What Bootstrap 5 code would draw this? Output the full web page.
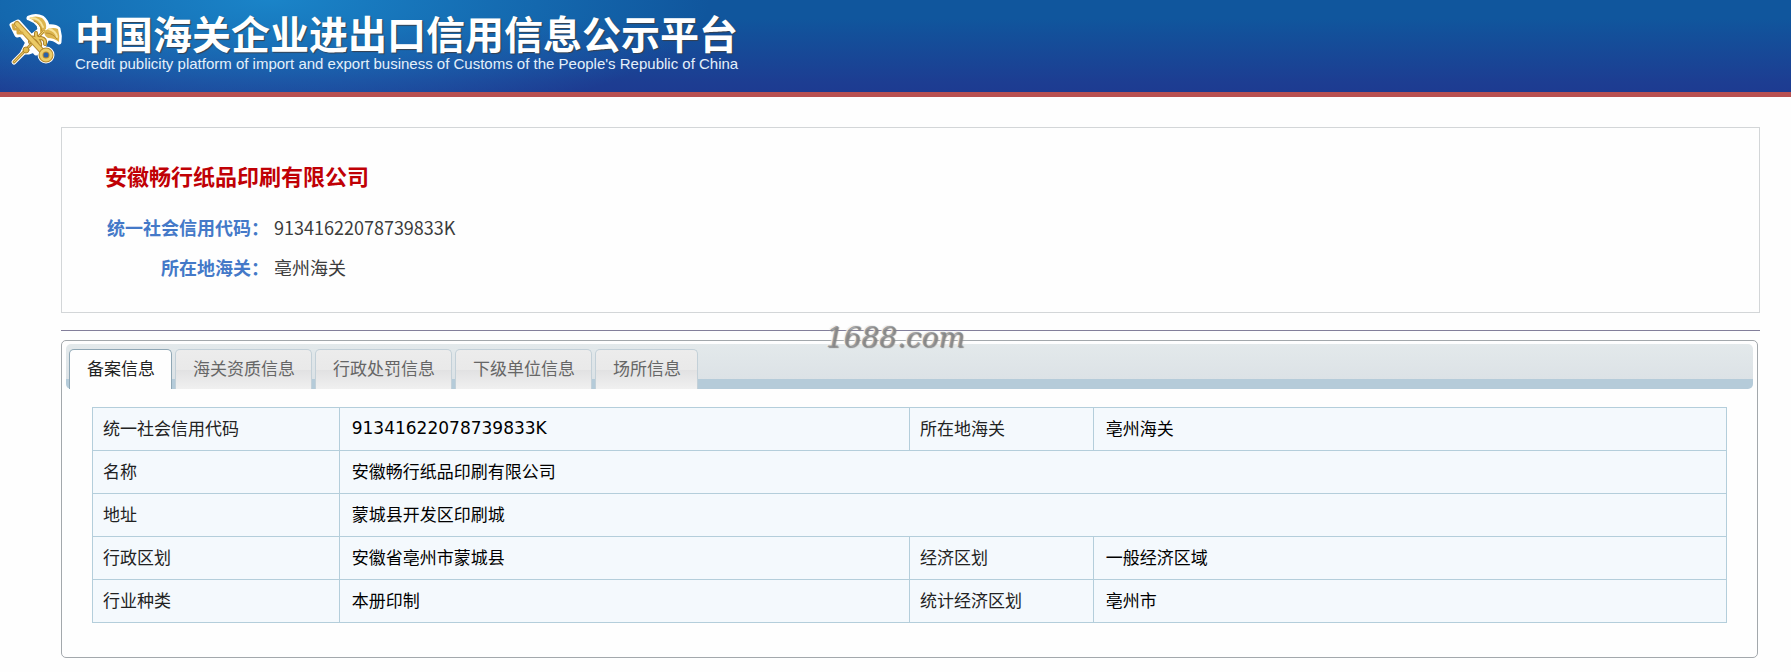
<!DOCTYPE html>
<html lang="zh-CN">
<head>
<meta charset="utf-8">
<meta name="viewport" content="width=device-width, initial-scale=1">
<title>中国海关企业进出口信用信息公示平台</title>
<link rel="stylesheet" href="https://cdn.jsdelivr.net/npm/bootstrap@5.3.0/dist/css/bootstrap.min.css">
<style>
  body { font-family: "Noto Sans CJK SC", sans-serif; font-size: 17px; line-height: 26px; color: #222; background: #fefefe; }
  .site-header {
    height: 97px; padding: 12px 8px 0; color: #fff; border-bottom: 5px solid #b85050;
    background:
      radial-gradient(ellipse 440px 130px at 270px 0, rgba(28, 140, 208, .85), rgba(28, 140, 208, 0)),
      linear-gradient(#10569d 0, #10569d 20%, #1d3d92 90%, #1d3b91);
  }
  .site-name { font-size: 39px; line-height: 40px; font-weight: 700; text-shadow: 1px 1px 1px #37414f; }
  .site-sub { font-family: "Liberation Sans", sans-serif; font-size: 15px; line-height: 16px; margin-top: 4px; color: #e4f0fa; }
  .page-main { margin: 30px 31px 0 61px; }
  .summary { border: 1px solid #d3d6d8; padding: 30px 43px 25px; }
  .company { font-size: 22px; line-height: 34px; font-weight: 700; color: #c00005; margin-bottom: 15px; }
  .facts { grid-template-columns: 164px 1fr; column-gap: 5px; font-size: 18px; line-height: 40px; }
  .facts dt { color: #4479c8; font-weight: 700; text-align: right; white-space: nowrap; }
  .facts dd { color: #3c3c3c; }
  .divider { height: 1px; background: #837f9b; margin: 17px 0 9px; }
  .tab-panel { border: 1px solid #a3a8ac; border-radius: 5px; padding: 3px 4px 34px; margin-right: 2px; }
  .tab-strip {
    height: 45px; padding: 5px 3px 0; gap: 3px; border-radius: 5px;
    background: linear-gradient(#e3e9eb 0, #dce2e6 35px, #b5cbd9 35px);
  }
  .tab-strip .tab-btn {
    border: 1px solid #c3d0d8; border-bottom: 0; border-radius: 5px 5px 0 0; padding: 0 16px 4px 17px; line-height: 35px;
    color: #666; background: linear-gradient(#ececec 0, #e9e9e9 50%, #e1e1e2 50%, #f0f0f0 100%);
  }
  .tab-strip .tab-btn.active { background: #fefefe; color: #222; border-color: #8fa7b5; }
  .record { margin: 18px 26px 0; }
  .record table { table-layout: fixed; background: #f4f9fd; border: 1px solid #b4cedb; }
  .record th, .record td { height: 43px; padding: 0 10px 2px; border: 1px solid #b4cedb; vertical-align: middle; }
  .record th { font-weight: 400; color: #222; }
  .record td { color: #000; padding-left: 12px; }
  .record .code { font-family: "DejaVu Sans", sans-serif; }
  .c1 { width: 15.1%; } .c2 { width: 34.9%; } .c3 { width: 11.25%; }
  .stamp {
    top: 322px; left: 46.1%; font: italic 28px/32px "DejaVu Serif", serif; color: rgba(135, 135, 135, .75);
    text-shadow: 1px 1px 1px #888, -1px -1px 1px #eee; pointer-events: none;
  }
</style>
</head>
<body>
<header class="site-header d-flex">
  <svg class="flex-shrink-0" width="67" height="56" viewBox="8 12 67 56" aria-hidden="true">
    <g stroke-linejoin="round" stroke-linecap="round">
      <!-- white rim round wings, staff and key -->
      <g fill="#fff" stroke="#fff" stroke-width="5">
        <path d="M29 18q7-3 13 0 5 4 5 9 8-1 11 2 2 7 1 13-5-4-11-4l-7-4-2-9q-4-5-10-7z"/>
        <path d="M12 25l6-3 24 27-6 4L21 34l-4 1z"/>
        <path d="M14 62L42 34"/>
        <circle cx="46" cy="55" r="6"/>
        <path d="M30 38l9-7 8 7-4 9-14 5-6 0z"/>
      </g>
      <!-- winged staff -->
      <path d="M14 62L44 31" stroke="#b98e30" stroke-width="3" fill="none"/>
      <path d="M14 62L44 31" stroke="#efd475" fill="none"/>
      <circle cx="26" cy="50" r="3" fill="#e2ba4b" stroke="#b0852b"/>
      <path d="M29 18q7-3 13 0 5 4 4 11l-6 4 0-6q-4-6-11-9z" fill="#dcb54e"/>
      <path d="M44 31q8-5 14-2 2 7 1 13-5-4-11-4-4-2-4-7z" fill="#dcb54e"/>
      <path d="M31 18q9 0 12 9M49 29q7 2 8 8" stroke="#f7e39a" stroke-width="2" fill="none"/>
      <path d="M34 21q6 2 8 10M46 33q7 0 11 6" stroke="#b98d31" fill="none"/>
      <path d="M30 42q0-7 7-3 5 5 2 9M36 33q-1 6 5 5 5 1 4 6" fill="none" stroke="#ad822a" stroke-width="4"/>
      <path d="M30 42q0-7 7-3 5 5 2 9M36 33q-1 6 5 5 5 1 4 6" fill="none" stroke="#e8c75e" stroke-width="2"/>
      <!-- key -->
      <path d="M17 24L41 50" stroke="#b98d31" stroke-width="6" fill="none"/>
      <path d="M17 24L41 50" stroke="#ebca65" stroke-width="4" fill="none"/>
      <path d="M13 25l1 4 4 0 0 4 4 0" fill="none" stroke="#d3a840" stroke-width="3"/>
      <circle cx="46" cy="55" r="5" fill="#2a62aa" stroke="#b68a30" stroke-width="5"/>
      <circle cx="46" cy="55" r="5" fill="none" stroke="#ecce6b" stroke-width="3"/>
    </g>
  </svg>
  <div class="text-nowrap">
    <h1 class="site-name m-0">中国海关企业进出口信用信息公示平台</h1>
    <div class="site-sub">Credit publicity platform of import and export business of Customs of the People's Republic of China</div>
  </div>
</header>

<main class="page-main">
  <section class="summary">
    <h2 class="company">安徽畅行纸品印刷有限公司</h2>
    <dl class="facts d-grid mb-0">
      <dt>统一社会信用代码：</dt><dd class="m-0">91341622078739833K</dd>
      <dt>所在地海关：</dt><dd class="m-0">亳州海关</dd>
    </dl>
  </section>
  <div class="divider"></div>
  <section class="tab-panel">
    <div class="tab-strip d-flex" role="tablist">
      <button class="tab-btn active" type="button" role="tab" aria-selected="true" aria-controls="record" id="tab-record">备案信息</button>
      <button class="tab-btn" type="button" role="tab" aria-selected="false">海关资质信息</button>
      <button class="tab-btn" type="button" role="tab" aria-selected="false">行政处罚信息</button>
      <button class="tab-btn" type="button" role="tab" aria-selected="false">下级单位信息</button>
      <button class="tab-btn" type="button" role="tab" aria-selected="false">场所信息</button>
    </div>
    <div class="record" id="record" role="tabpanel" aria-labelledby="tab-record">
      <table class="w-100">
        <colgroup><col class="c1"><col class="c2"><col class="c3"><col></colgroup>
        <tbody>
          <tr><th scope="row">统一社会信用代码</th><td class="code">91341622078739833K</td><th scope="row">所在地海关</th><td>亳州海关</td></tr>
          <tr><th scope="row">名称</th><td colspan="3">安徽畅行纸品印刷有限公司</td></tr>
          <tr><th scope="row">地址</th><td colspan="3">蒙城县开发区印刷城</td></tr>
          <tr><th scope="row">行政区划</th><td>安徽省亳州市蒙城县</td><th scope="row">经济区划</th><td>一般经济区域</td></tr>
          <tr><th scope="row">行业种类</th><td>本册印制</td><th scope="row">统计经济区划</th><td>亳州市</td></tr>
        </tbody>
      </table>
    </div>
  </section>
</main>
<div class="stamp position-absolute">1688.com</div>
<script src="https://cdn.jsdelivr.net/npm/bootstrap@5.3.0/dist/js/bootstrap.bundle.min.js"></script>
</body>
</html>
